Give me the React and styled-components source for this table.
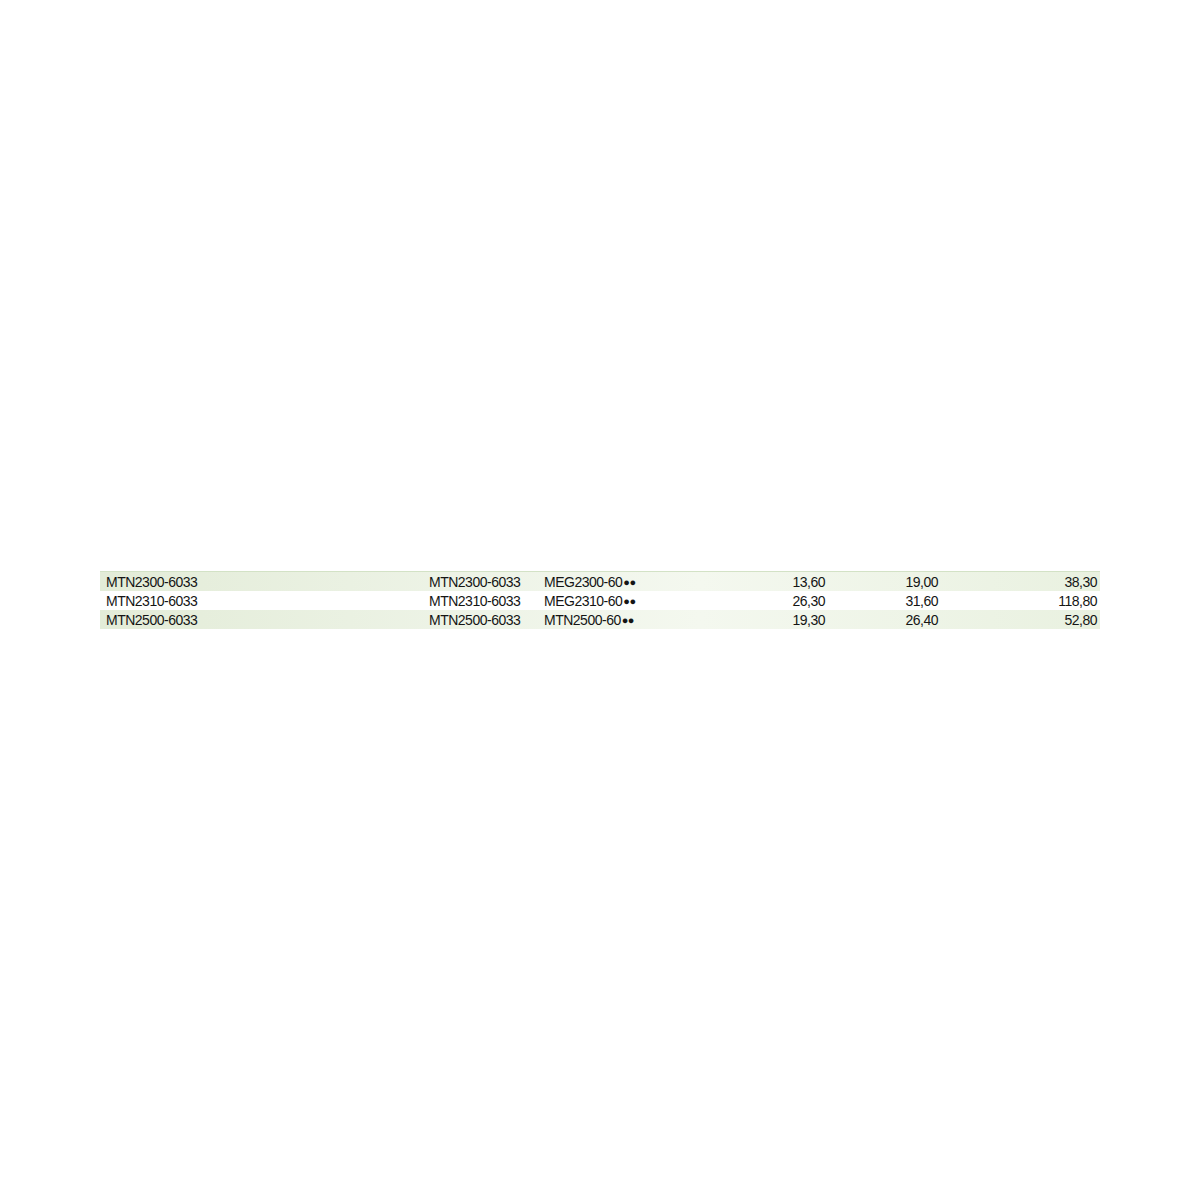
import React from 'react'
import styled, { createGlobalStyle } from 'styled-components'

const GlobalStyle = createGlobalStyle`
  body {
    margin: 0;
    background: #fff;
    font-family: "Liberation Sans", Arial, sans-serif;
  }
`

const Page = styled.div`
  width: 1200px;
  height: 1200px;
  padding: 571px 100px 0;
  box-sizing: border-box;
`

const Table = styled.div`
  border-top: 1px solid #d3e2c6;
`

const Row = styled.div`
  display: grid;
  grid-template-columns: 323px 115px 162px 127px 113px 160px;
  height: 19px;
  box-sizing: border-box;
  padding-top: 1px;
  line-height: 19px;
  font-size: 14px;
  letter-spacing: -0.5px;
  color: #151515;
  background: ${p => (p.$shaded ? 'linear-gradient(90deg, #e3ecd8 0%, #edf3e6 35%, #f4f8ef 60%, #e9f1e0 100%)' : '#fff')};
`

const Cell = styled.div`
  padding: ${p => (p.$num ? `0 ${p.$pad || 2}px 0 0` : '0 0 0 6px')};
  text-align: ${p => (p.$num ? 'right' : 'left')};
  white-space: nowrap;
`

const Dots = styled.span`
  font-size: 11px;
  letter-spacing: -0.5px;
  position: relative;
  top: -1px;
  margin-left: 1px;
`

const rows = [
  ['MTN2300-6033', 'MTN2300-6033', 'MEG2300-60', '13,60', '19,00', '38,30'],
  ['MTN2310-6033', 'MTN2310-6033', 'MEG2310-60', '26,30', '31,60', '118,80'],
  ['MTN2500-6033', 'MTN2500-6033', 'MTN2500-60', '19,30', '26,40', '52,80'],
]

export default function App() {
  return (
    <Page>
      <GlobalStyle />
      <Table>
        {rows.map((r, i) => (
          <Row key={r[0]} $shaded={i % 2 === 0}>
            <Cell>{r[0]}</Cell>
            <Cell>{r[1]}</Cell>
            <Cell>{r[2]}<Dots>●●</Dots></Cell>
            <Cell $num>{r[3]}</Cell>
            <Cell $num>{r[4]}</Cell>
            <Cell $num $pad={3}>{r[5]}</Cell>
          </Row>
        ))}
      </Table>
    </Page>
  )
}
